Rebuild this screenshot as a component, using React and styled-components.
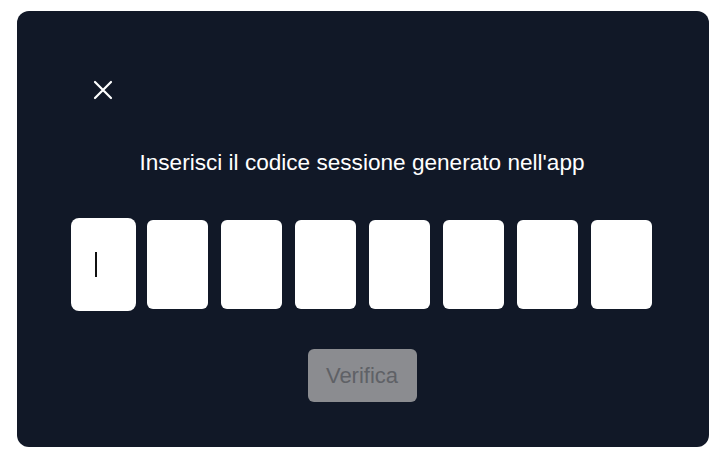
import React from "react";
import styled, { createGlobalStyle } from "styled-components";

const Global = createGlobalStyle`
  html, body { margin: 0; padding: 0; background: #ffffff; }
  body { font-family: "Liberation Sans", Arial, sans-serif; }
`;

const Page = styled.div`
  width: 725px;
  height: 458px;
  padding: 11px 16px 0 17px;
  box-sizing: border-box;
`;

const Card = styled.div`
  width: 692px;
  height: 436px;
  box-sizing: border-box;
  background: #111827;
  border-radius: 12px;
  padding: 69px 2px 0 0;
  display: flex;
  flex-direction: column;
  align-items: center;
`;

const Header = styled.div`
  align-self: stretch;
  display: flex;
  padding-left: 76px;
`;

const Close = styled.button`
  width: 20px;
  height: 20px;
  padding: 0;
  border: 0;
  background: transparent;
  display: flex;
  align-items: center;
  justify-content: center;
  cursor: pointer;
`;

const Title = styled.p`
  margin: 49px 0 0 0;
  font-size: 22.6px;
  line-height: 28px;
  color: #ffffff;
  letter-spacing: 0;
`;

const Row = styled.div`
  margin-top: 43px;
  display: flex;
  gap: 13px;
  align-items: center;
`;

const Box = styled.div`
  width: 61px;
  height: 89px;
  box-sizing: border-box;
  background: #ffffff;
  border-radius: 6px;
  display: flex;
  align-items: center;
  padding-left: 22px;
  box-shadow: ${(p) => (p.$focused ? "0 0 0 2px #ffffff" : "none")};
`;

const Caret = styled.div`
  width: 2px;
  height: 25px;
  background: #111111;
`;

const Button = styled.button`
  margin-top: 40px;
  width: 109px;
  height: 53px;
  border: 0;
  border-radius: 6px;
  background: #8b8c90;
  color: #5f6166;
  font-family: "Liberation Sans", Arial, sans-serif;
  font-size: 22px;
  padding: 0;
  cursor: not-allowed;
`;

export default function App() {
  const boxes = Array.from({ length: 8 });
  return (
    <>
      <Global />
      <Page>
        <Card>
          <Header>
            <Close aria-label="Chiudi">
              <svg width="20" height="20" viewBox="0 0 20 20">
                <path d="M2 2 L18 18 M18 2 L2 18" stroke="#ffffff" strokeWidth="2.2" strokeLinecap="round" />
              </svg>
            </Close>
          </Header>
          <Title>Inserisci il codice sessione generato nell'app</Title>
          <Row>
            {boxes.map((_, i) => (
              <Box key={i} $focused={i === 0}>
                {i === 0 && <Caret />}
              </Box>
            ))}
          </Row>
          <Button disabled>Verifica</Button>
        </Card>
      </Page>
    </>
  );
}
